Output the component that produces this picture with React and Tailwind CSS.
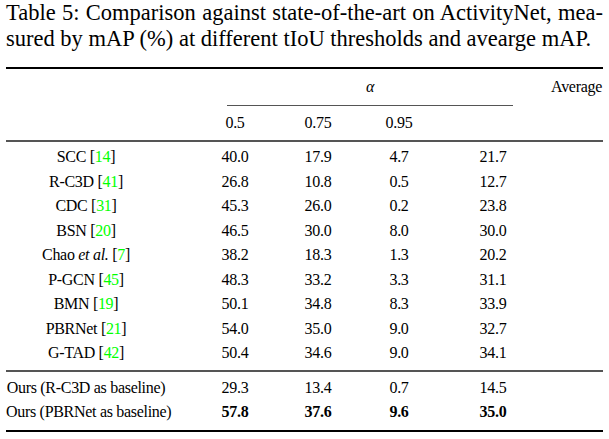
import React from "react";

const rows = [
  ["SCC", "14", "40.0", "17.9", "4.7", "21.7"],
  ["R-C3D", "41", "26.8", "10.8", "0.5", "12.7"],
  ["CDC", "31", "45.3", "26.0", "0.2", "23.8"],
  ["BSN", "20", "46.5", "30.0", "8.0", "30.0"],
  ["Chao", "7", "38.2", "18.3", "1.3", "20.2"],
  ["P-GCN", "45", "48.3", "33.2", "3.3", "31.1"],
  ["BMN", "19", "50.1", "34.8", "8.3", "33.9"],
  ["PBRNet", "21", "54.0", "35.0", "9.0", "32.7"],
  ["G-TAD", "42", "50.4", "34.6", "9.0", "34.1"],
];

function Cite({ n }) {
  return (
    <span>
      [<span className="text-[#00ff00]">{n}</span>]
    </span>
  );
}

function Row({ name, cells, bold }) {
  return (
    <div className="flex h-[24.5px] items-center">
      <div className="w-[160px] text-center whitespace-nowrap">{name}</div>
      <div className={"ml-[29px] w-[80px] text-center" + (bold ? " font-bold" : "")}>{cells[0]}</div>
      <div className={"ml-[3px] w-[80px] text-center" + (bold ? " font-bold" : "")}>{cells[1]}</div>
      <div className={"ml-[1px] w-[80px] text-center" + (bold ? " font-bold" : "")}>{cells[2]}</div>
      <div className={"ml-[14px] w-[80px] text-center" + (bold ? " font-bold" : "")}>{cells[3]}</div>
    </div>
  );
}

export default function App() {
  return (
    <div className="w-[609px] h-[439px] bg-white text-black px-[6px] font-['Liberation_Serif','Times_New_Roman',serif] overflow-hidden">
      <div className="text-[22.5px] leading-[25.5px]">
        <div className="text-justify [text-align-last:justify]">
          Table 5: Comparison against state-of-the-art on ActivityNet, mea-
        </div>
        <div>sured by mAP (%) at different tIoU thresholds and avearge mAP.</div>
      </div>

      <div className="mt-[16px] text-[16px] tracking-[-0.3px]">
        <div className="h-[2px] bg-black" />

        <div className="flex h-[36px] items-center">
          <div className="ml-[221px] w-[286px] text-center italic">α</div>
          <div className="ml-auto pr-[1px]">Average</div>
        </div>
        <div className="ml-[221px] w-[286px] h-px bg-[#555]" />
        <div className="flex h-[34px] items-center">
          <div className="w-[160px]" />
          <div className="ml-[29px] w-[80px] text-center">0.5</div>
          <div className="ml-[3px] w-[80px] text-center">0.75</div>
          <div className="ml-[1px] w-[80px] text-center">0.95</div>
        </div>
        <div className="h-[2px] bg-[#555]" />

        <div className="pt-[3px] pb-[4px]">
          {rows.map((r) => (
            <Row
              key={r[0]}
              name={
                r[0] === "Chao" ? (
                  <>
                    Chao <i>et al.</i> <Cite n={r[1]} />
                  </>
                ) : (
                  <>
                    {r[0]} <Cite n={r[1]} />
                  </>
                )
              }
              cells={r.slice(2)}
            />
          ))}
        </div>
        <div className="h-[2px] bg-[#555]" />

        <div className="pt-[4px] pb-[5px]">
          <Row name="Ours (R-C3D as baseline)" cells={["29.3", "13.4", "0.7", "14.5"]} />
          <Row name="Ours (PBRNet as baseline)" cells={["57.8", "37.6", "9.6", "35.0"]} bold />
        </div>
        <div className="h-[2px] bg-black" />
      </div>
    </div>
  );
}
